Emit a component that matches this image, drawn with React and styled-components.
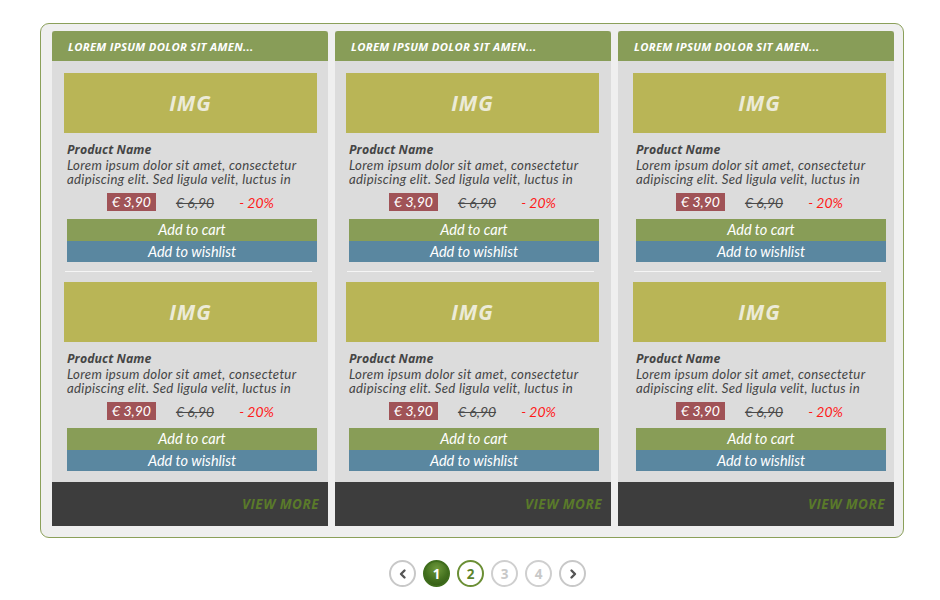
import React from "react";
import styled, { createGlobalStyle } from "styled-components";

const GlobalStyle = createGlobalStyle`
	body {
		margin: 0;
		background: #ffffff;
		font-family: "Open Sans", "Liberation Sans", sans-serif;
	}
`;

const Page = styled.div`
	padding: 23px 0 0 40px;
`;

const Frame = styled.div`
	width: 864px;
	box-sizing: border-box;
	border: 1px solid #8ba05a;
	border-radius: 9px;
	background: #efefef;
	padding: 7px 9px 11px 11px;
	display: flex;
	gap: 7px;
`;

const Column = styled.div`
	width: 276px;
	height: 495px;
	background: #dcdcdc;
	display: flex;
	flex-direction: column;
`;

const Header = styled.div`
	height: 30px;
	background: #889d58;
	border-radius: 3px 3px 0 0;
	display: flex;
	align-items: center;
	padding-left: 16px;
	color: #ffffff;
	font-size: 11.3px;
	font-weight: 700;
	font-style: italic;
	letter-spacing: 0.3px;
	text-transform: uppercase;
`;

const Body = styled.div`
	padding: 12px 0 0 ${(p) => p.$offset}px;
`;

const Item = styled.div`
	width: 253px;
`;

const Img = styled.div`
	height: 60px;
	background: #b9b556;
	display: flex;
	align-items: center;
	justify-content: center;
	color: #ecebd8;
	font-size: 21px;
	font-weight: 700;
	font-style: italic;
	letter-spacing: 1px;
`;

const Info = styled.div`
	padding-left: 3px;
	margin-top: 9px;
	color: #454545;
`;

const Name = styled.div`
	font-size: 12.3px;
	line-height: 15px;
	margin-bottom: 1px;
	font-weight: 700;
	font-style: italic;
	letter-spacing: 0.1px;
`;

const DescLine = styled.div`
	font-family: Lato, "Open Sans", sans-serif;
	font-size: 13.2px;
	line-height: 14px;
	letter-spacing: 0.3px;
	font-style: italic;
	white-space: nowrap;
`;

const PriceRow = styled.div`
	margin-top: 7px;
	height: 18px;
	display: flex;
	align-items: center;
	justify-content: center;
	gap: 20px;
	font-family: Lato, "Open Sans", sans-serif;
	font-style: italic;
	font-size: 14px;
`;

const Price = styled.span`
	background: #a05357;
	color: #ffffff;
	height: 18px;
	line-height: 18px;
	padding: 0 5px;
`;

const OldPrice = styled.span`
	color: #4a4a4a;
	text-decoration: line-through;
	margin-right: 5px;
`;

const Discount = styled.span`
	color: #ff1a1a;
`;

const Button = styled.div`
	margin-left: 3px;
	width: 250px;
	height: ${(p) => p.$h}px;
	line-height: ${(p) => p.$h}px;
	background: ${(p) => p.$bg};
	margin-top: ${(p) => p.$mt || 0}px;
	color: #ffffff;
	text-align: center;
	font-family: Lato, "Open Sans", sans-serif;
	font-style: italic;
	font-size: 14.5px;
`;

const Divider = styled.div`
	margin: 9px 5px 10px 1px;
	height: 1px;
	background: #f5f5f5;
`;

const Footer = styled.div`
	margin-top: auto;
	height: 44px;
	background: #3d3d3d;
	display: flex;
	align-items: center;
	justify-content: flex-end;
	padding-right: 9px;
	color: #5a7a2a;
	font-size: 13.5px;
	font-weight: 700;
	font-style: italic;
	letter-spacing: 0.5px;
`;

const Pager = styled.div`
	width: 864px;
	box-sizing: border-box;
	padding-left: 31px;
	margin-top: 22px;
	display: flex;
	justify-content: center;
	gap: 7px;
`;

const Dot = styled.div`
	width: 27px;
	height: 27px;
	box-sizing: border-box;
	border-radius: 50%;
	border: 2px solid ${(p) => p.$border};
	background: ${(p) => p.$bg || "#ffffff"};
	color: ${(p) => p.$color};
	display: flex;
	align-items: center;
	justify-content: center;
	font-size: 13.5px;
	font-weight: 700;
`;

const Chevron = ({ dir }) => (
	<svg width="12" height="12" viewBox="0 0 12 12">
		<polyline
			points={dir === "left" ? "7.5,2.5 4,6 7.5,9.5" : "4.5,2.5 8,6 4.5,9.5"}
			fill="none"
			stroke="#555"
			strokeWidth="2.4"
			strokeLinecap="round"
			strokeLinejoin="round"
		/>
	</svg>
);

const Product = ({ last }) => (
	<Item>
		<Img>IMG</Img>
		<Info>
			<Name>Product Name</Name>
			<DescLine>Lorem ipsum dolor sit amet, consectetur</DescLine>
			<DescLine>adipiscing elit. Sed ligula velit, luctus in</DescLine>
		</Info>
		<PriceRow>
			<Price>€ 3,90</Price>
			<OldPrice>€ 6,90</OldPrice>
			<Discount>- 20%</Discount>
		</PriceRow>
		<Button $h={22} $mt={8} $bg="#889d57">
			Add to cart
		</Button>
		<Button $h={21} $bg="#5a87a0">
			Add to wishlist
		</Button>
		{!last && <Divider />}
	</Item>
);

const offsets = [12, 11, 15];

export default function App() {
	return (
		<Page>
			<GlobalStyle />
			<Frame>
				{offsets.map((o, i) => (
					<Column key={i}>
						<Header>Lorem ipsum dolor sit amen...</Header>
						<Body $offset={o}>
							<Product />
							<Product last />
						</Body>
						<Footer>VIEW MORE</Footer>
					</Column>
				))}
			</Frame>
			<Pager>
				<Dot $border="#c8c8c8">
					<Chevron dir="left" />
				</Dot>
				<Dot
					$border="#3f6d1c"
					$bg="radial-gradient(circle at 50% 30%, #6f9a3c 0%, #44711f 55%, #2f5512 100%)"
					$color="#ffffff"
				>
					1
				</Dot>
				<Dot $border="#6b8f35" $color="#5d842c">
					2
				</Dot>
				<Dot $border="#cfcfcf" $color="#c8c8c8">
					3
				</Dot>
				<Dot $border="#cfcfcf" $color="#c8c8c8">
					4
				</Dot>
				<Dot $border="#c8c8c8">
					<Chevron dir="right" />
				</Dot>
			</Pager>
		</Page>
	);
}
